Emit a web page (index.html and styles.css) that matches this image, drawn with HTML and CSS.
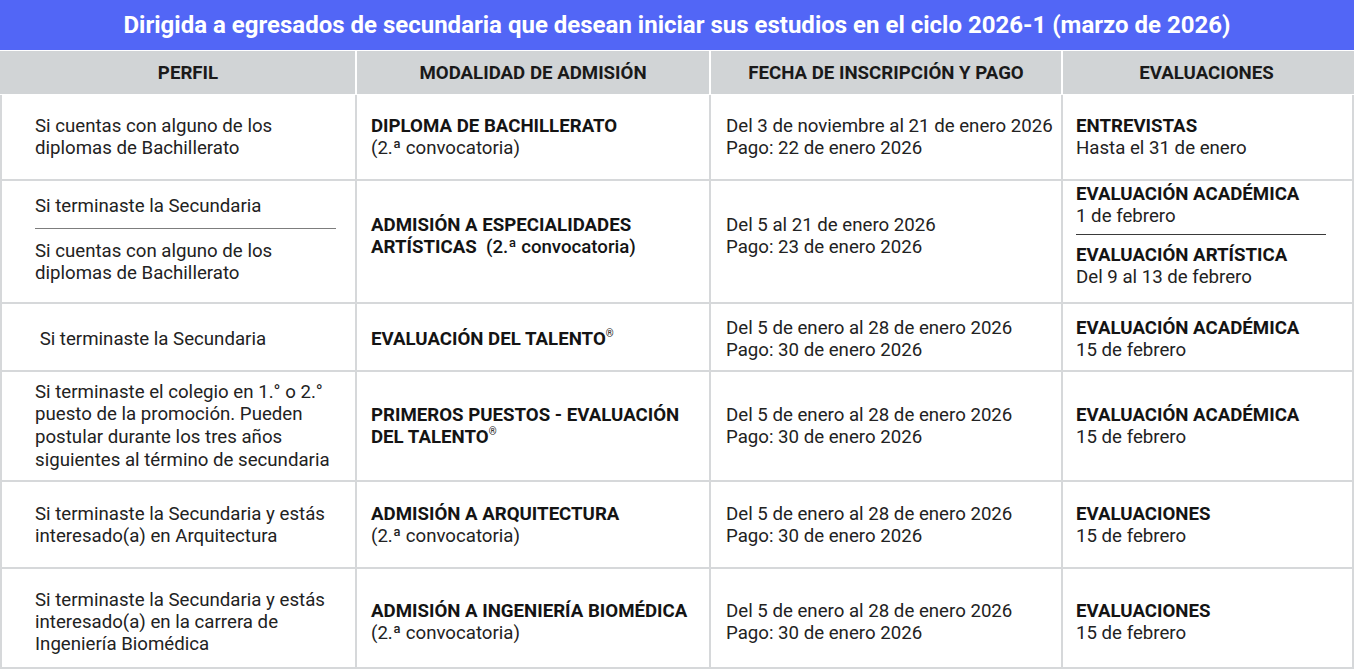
FILE: index.html
```html
<!DOCTYPE html>
<html lang="es">
<head>
<meta charset="utf-8">
<title>Admisión 2026-1</title>
<link rel="stylesheet" href="styles.css">
</head>
<body>
<div class="banner">Dirigida a egresados de secundaria que desean iniciar sus estudios en el ciclo 2026-1 (marzo de 2026)</div>
<div class="grid">
  <div class="th c1">PERFIL</div>
  <div class="th c2">MODALIDAD DE ADMISIÓN</div>
  <div class="th c3">FECHA DE INSCRIPCIÓN Y PAGO</div>
  <div class="th c4">EVALUACIONES</div>

  <div class="td c1"><div>Si cuentas con alguno de los<br>diplomas de Bachillerato</div></div>
  <div class="td c2"><div><b>DIPLOMA DE BACHILLERATO</b><br>(2.ª convocatoria)</div></div>
  <div class="td c3"><div>Del 3 de noviembre al 21 de enero 2026<br>Pago: 22 de enero 2026</div></div>
  <div class="td c4"><div><b>ENTREVISTAS</b><br>Hasta el 31 de enero</div></div>

  <div class="td c1 r2"><div class="stack"><div>Si terminaste la Secundaria</div><hr class="sep1"><div>Si cuentas con alguno de los<br>diplomas de Bachillerato</div></div></div>
  <div class="td c2 r2"><div><b>ADMISIÓN A ESPECIALIDADES<br>ARTÍSTICAS</b>&nbsp; <span class="med">(2.ª convocatoria)</span></div></div>
  <div class="td c3 r2"><div>Del 5 al 21 de enero 2026<br>Pago: 23 de enero 2026</div></div>
  <div class="td c4 r2"><div class="stack"><div><b>EVALUACIÓN ACADÉMICA</b><br>1 de febrero</div><hr class="sep4"><div><b>EVALUACIÓN ARTÍSTICA</b><br>Del 9 al 13 de febrero</div></div></div>

  <div class="td c1 r3"><div>&nbsp;Si terminaste la Secundaria</div></div>
  <div class="td c2 r3"><div><b>EVALUACIÓN DEL TALENTO<sup>®</sup></b></div></div>
  <div class="td c3 r3"><div>Del 5 de enero al 28 de enero 2026<br>Pago: 30 de enero 2026</div></div>
  <div class="td c4 r3"><div><b>EVALUACIÓN ACADÉMICA</b><br>15 de febrero</div></div>

  <div class="td c1 r4"><div>Si terminaste el colegio en 1.° o 2.°<br>puesto de la promoción. Pueden<br>postular durante los tres años<br>siguientes al término de secundaria</div></div>
  <div class="td c2"><div><b>PRIMEROS PUESTOS - EVALUACIÓN<br>DEL TALENTO<sup>®</sup></b></div></div>
  <div class="td c3"><div>Del 5 de enero al 28 de enero 2026<br>Pago: 30 de enero 2026</div></div>
  <div class="td c4"><div><b>EVALUACIÓN ACADÉMICA</b><br>15 de febrero</div></div>

  <div class="td c1"><div>Si terminaste la Secundaria y estás<br>interesado(a) en Arquitectura</div></div>
  <div class="td c2"><div><b>ADMISIÓN A ARQUITECTURA</b><br>(2.ª convocatoria)</div></div>
  <div class="td c3"><div>Del 5 de enero al 28 de enero 2026<br>Pago: 30 de enero 2026</div></div>
  <div class="td c4"><div><b>EVALUACIONES</b><br>15 de febrero</div></div>

  <div class="td c1 r6"><div>Si terminaste la Secundaria y estás<br>interesado(a) en la carrera de<br>Ingeniería Biomédica</div></div>
  <div class="td c2 r6"><div><b>ADMISIÓN A INGENIERÍA BIOMÉDICA</b><br>(2.ª convocatoria)</div></div>
  <div class="td c3 r6"><div>Del 5 de enero al 28 de enero 2026<br>Pago: 30 de enero 2026</div></div>
  <div class="td c4 r6"><div><b>EVALUACIONES</b><br>15 de febrero</div></div>
</div>
</body>
</html>
```

FILE: styles.css
```css
html, body {
  margin: 0;
  padding: 0;
  background: #ffffff;
}
body {
  font-family: Roboto, "Liberation Sans", sans-serif;
  color: #222222;
  width: 1354px;
}
.banner {
  height: 50px;
  background: #5266f6;
  color: #ffffff;
  font-weight: 700;
  font-size: 24px;
  line-height: 50px;
  text-align: center;
  margin-bottom: 1px;
}
.grid {
  display: grid;
  grid-template-columns: 357px 354px 352px 291px;
  grid-template-rows: 44px 86px 123px 68px 110px 87px 100px;
}
.th {
  background: #d1d4d6;
  border-right: 2px solid #ffffff;
  border-bottom: 1px solid #ffffff;
  display: flex;
  align-items: center;
  justify-content: center;
  font-weight: 700;
  font-size: 18.67px;
  color: #1a1a1a;
  white-space: nowrap;
}
.th.c4 { border-right: 0; padding-right: 4px; }
.td {
  border-right: 2px solid #d6d8da;
  border-bottom: 2px solid #d6d8da;
  display: flex;
  align-items: center;
  font-size: 18.67px;
  line-height: 22px;
  white-space: nowrap;
}
.td.c1 { border-left: 2px solid #d6d8da; }
.c1 { padding: 0 14px 0 33px; }
.th.c1 { padding-left: 35px; }
.td.c2 { padding-left: 14px; }
.td.c3 { padding-left: 15px; }
.td.c4 { padding-left: 13px; }
.td.r2 { padding-bottom: 11px; }
.td.c1.r2 { padding-top: 10px; padding-bottom: 15px; }
.td.c4.r2 { align-items: flex-start; padding-top: 2px; }
.td.r3 { padding-top: 4px; }
.td.r4 { line-height: 22.67px; }
.td.r6 { padding-top: 8px; }
.stack { width: 100%; }
b { font-weight: 700; color: #141414; }
.med { font-weight: 500; color: #141414; }
sup {
  font-size: 10px;
  line-height: 0;
  vertical-align: 8px;
  font-weight: 400;
}
hr { border: 0; height: 1px; padding: 0; }
.sep1 { background: #7d7d7d; margin: 11px 5px 11px 0; }
.sep4 { background: #3a3a3a; margin: 7px 0 9px 0; width: 250px; }
```
